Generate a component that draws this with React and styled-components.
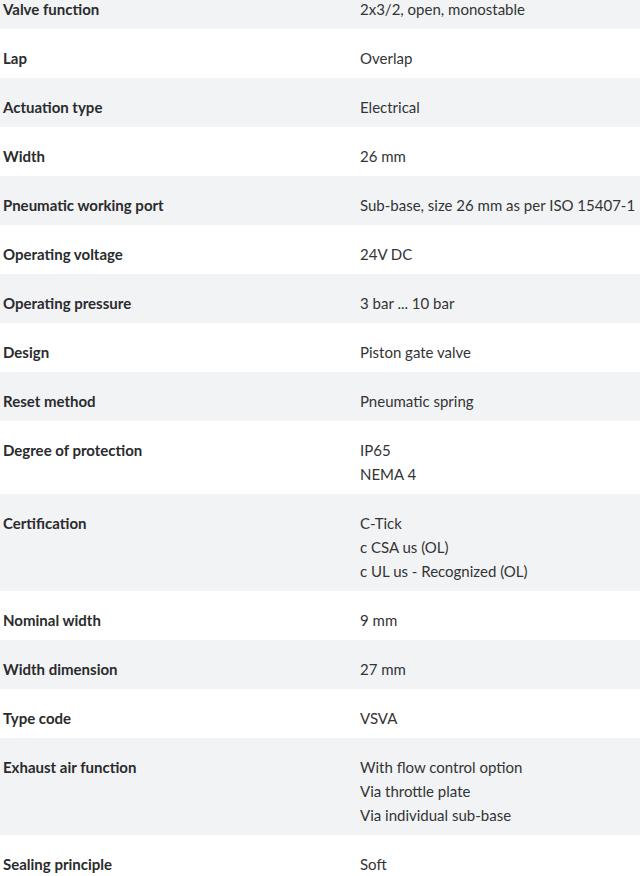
import styled, { createGlobalStyle } from "styled-components"

const specs = [
  ["Valve function", ["2x3/2, open, monostable"]],
  ["Lap", ["Overlap"]],
  ["Actuation type", ["Electrical"]],
  ["Width", ["26 mm"]],
  ["Pneumatic working port", ["Sub-base, size 26 mm as per ISO 15407-1"]],
  ["Operating voltage", ["24V DC"]],
  ["Operating pressure", ["3 bar ... 10 bar"]],
  ["Design", ["Piston gate valve"]],
  ["Reset method", ["Pneumatic spring"]],
  ["Degree of protection", ["IP65", "NEMA 4"]],
  ["Certification", ["C-Tick", "c CSA us (OL)", "c UL us - Recognized (OL)"]],
  ["Nominal width", ["9 mm"]],
  ["Width dimension", ["27 mm"]],
  ["Type code", ["VSVA"]],
  ["Exhaust air function", ["With flow control option", "Via throttle plate", "Via individual sub-base"]],
  ["Sealing principle", ["Soft"]],
]

const App = () => {
  return (
    <>
      <GlobalStyle />
      <Table>
        {specs.map(([label, values], i) => (
          <Row key={label} $shaded={i % 2 === 0}>
            <Label>{label}</Label>
            <Values>
              {values.map((v) => (
                <Line key={v}>{v}</Line>
              ))}
            </Values>
          </Row>
        ))}
      </Table>
    </>
  )
}

export default App

const GlobalStyle = createGlobalStyle`
  html, body {
    margin: 0;
    padding: 0;
    background: #fff;
    overflow: hidden;
  }
  body {
    font-family: Lato, "Noto Sans", sans-serif;
    color: #2e2f31;
  }
`

const Table = styled.div`
  width: 640px;
  margin-top: -20px;
`

const Row = styled.div`
  display: grid;
  grid-template-columns: 357px 1fr;
  padding: 17px 0 8px 3px;
  background: ${(p) => (p.$shaded ? "#f2f3f5" : "#fff")};
  font-size: 15px;
  line-height: 24px;
`

const Label = styled.div`
  font-weight: 700;
  color: #2a2b2d;
`

const Values = styled.div`
  display: flex;
  flex-direction: column;
`

const Line = styled.span`
  white-space: nowrap;
  color: #333436;
`
